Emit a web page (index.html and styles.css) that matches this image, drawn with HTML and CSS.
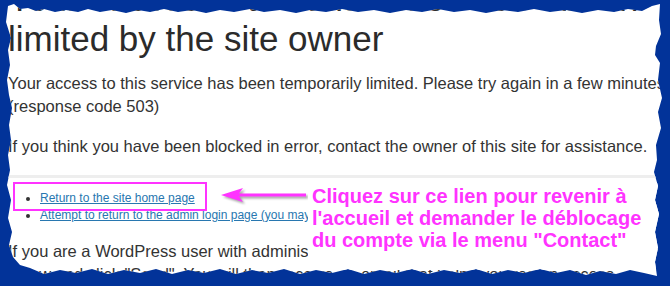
FILE: index.html
```html
<!DOCTYPE html>
<html lang="en">
  <head>
    <meta charset="UTF-8" />
    <meta name="viewport" content="width=device-width, initial-scale=1.0" />
    <title>Access limited</title>
    <link rel="stylesheet" href="styles.css">
  </head>
  <body>
    <div class="paper">
      <div class="page">
        <h1 class="title"><span class="titleTop">Your access to this site has been</span><br>limited by the site owner</h1>

        <p>Your access to this service has been temporarily limited. Please try again in a few minutes.<br>(response code 503)</p>

        <p>If you think you have been blocked in error, contact the owner of this site for assistance.</p>

        <hr class="divider" />

        <ul class="links">
          <li><a href="#">Return to the site home page</a></li>
          <li><a href="#">Attempt to return to the admin login page (you may be able to unblock yourself)</a></li>
        </ul>

        <p>If you are a WordPress user with administrative privileges on this site, please enter your email in the box below and click "Send". You will then receive an email that helps you regain access.</p>
      </div>

      <!-- Annotation on top of the screenshot -->
      <div class="highlight"></div>
      <svg class="arrow" width="96" height="22" viewBox="0 0 96 22">
        <polygon points="5,11 27,4 23,9.5 90,9.5 90,12.5 23,12.5 27,18" fill="#ff33ff" />
      </svg>
      <div class="note">
        <div class="noteText">Cliquez sur ce lien pour revenir à l'accueil et demander le déblocage du compte via le menu "Contact"</div>
      </div>
    </div>
  </body>
</html>
```

FILE: styles.css
```css
body {
  margin: 0;
  background-color: #023399;
  font-family: "Liberation Sans", Arial, sans-serif;
}
.paper {
  position: relative;
  height: 286px;
  overflow: hidden;
  background-color: #fff;
  clip-path: polygon(
    8px 6px, 14px 4px, 20px 9px, 28px 8px, 36px 11px, 44px 9px, 55px 12px,
    66px 10px, 78px 12px, 88px 9px, 100px 12px, 112px 10px, 126px 13px,
    138px 10px, 150px 12px, 164px 9px, 178px 12px, 192px 10px, 206px 13px,
    220px 10px, 234px 12px, 250px 9px, 264px 12px, 280px 10px, 296px 13px,
    310px 10px, 326px 12px, 342px 9px, 358px 12px, 374px 10px, 390px 13px,
    406px 10px, 422px 12px, 438px 9px, 454px 12px, 470px 10px, 486px 13px,
    502px 10px, 518px 12px, 534px 9px, 550px 12px, 566px 10px, 582px 13px,
    598px 10px, 614px 12px, 628px 9px, 642px 11px, 652px 6px, 660px 4px,
    659px 20px, 661px 34px, 656px 46px, 655px 55px, 660px 63px, 658px 80px,
    662px 98px, 658px 112px, 661px 128px, 656px 145px, 657px 160px,
    654px 172px, 658px 186px, 655px 200px, 659px 214px, 655px 232px,
    658px 248px, 655px 262px, 657px 276px,
    644px 273px, 630px 270px, 616px 274px, 600px 271px, 586px 275px,
    570px 270px, 556px 273px, 540px 269px, 524px 273px, 508px 270px,
    492px 274px, 476px 269px, 460px 273px, 444px 270px, 428px 274px,
    412px 269px, 396px 273px, 380px 270px, 364px 274px, 348px 269px,
    332px 273px, 316px 270px, 300px 274px, 284px 269px, 268px 273px,
    252px 270px, 236px 274px, 220px 269px, 204px 273px, 188px 270px,
    172px 274px, 156px 269px, 140px 273px, 124px 270px, 108px 274px,
    92px 269px, 76px 273px, 60px 270px, 44px 274px, 30px 268px, 20px 265px,
    13px 257px, 9px 245px, 12px 232px, 8px 218px, 11px 200px, 7px 185px,
    10px 170px, 8px 155px, 11px 140px, 9px 125px, 12px 108px, 9px 95px,
    7px 80px, 10px 65px, 8px 50px, 11px 38px, 6px 22px
  );
}
.page {
  width: 780px;
  padding-left: 8px;
  color: #333;
}
.title {
  margin: -21px 0 13px 0;
  font-size: 35px;
  font-weight: normal;
  line-height: 40px;
  color: #2b2b2b;
}
.titleTop {
  word-spacing: 20px;
}
p {
  margin: 0 0 17px;
  font-size: 16.5px;
  line-height: 23px;
}
.divider {
  height: 3px;
  margin: 0 0 12px;
  border: none;
  background-color: #eee;
}
.links {
  margin: 0 0 16px;
  padding-left: 32px;
  font-size: 12px;
  line-height: 17px;
}
.links a {
  color: #2877b0;
}
.highlight {
  position: absolute;
  left: 13px;
  top: 182px;
  width: 194px;
  height: 29px;
  box-sizing: border-box;
  border: 2px solid #ff33ff;
}
.arrow {
  position: absolute;
  left: 216px;
  top: 184px;
  filter: drop-shadow(2px 2px 1px rgba(0, 0, 0, 0.35));
}
.note {
  position: absolute;
  left: 308px;
  top: 183px;
  right: 0;
  height: 85px;
  padding: 2px 0 0 4px;
  background-color: #fff;
}
.noteText {
  width: 340px;
  font-size: 20px;
  font-weight: bold;
  line-height: 22px;
  color: #ff33ff;
}
```
